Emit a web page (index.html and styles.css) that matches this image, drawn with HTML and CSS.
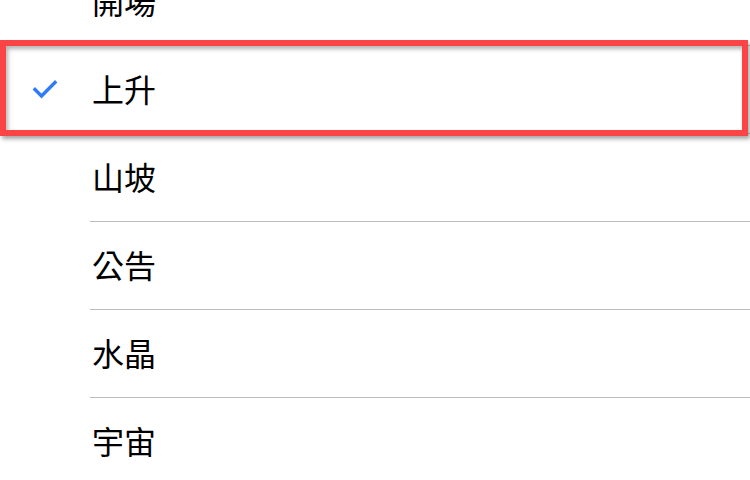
FILE: index.html
```html
<!DOCTYPE html>
<html lang="zh-Hant">
<head>
  <meta charset="UTF-8" />
  <meta name="viewport" content="width=device-width, initial-scale=1.0"/>
  <title>鈴聲選擇</title>
  <link rel="stylesheet" href="styles.css">
</head>
<body>
  <ul class="options">
    <li class="option"><span class="label">開場</span></li>
    <li class="option selected">
      <svg class="check" width="26" height="20" viewBox="0 0 26 20">
        <polyline points="3,10.5 9.5,17 23,3.5" fill="none" stroke="#2f7bf5" stroke-width="3.4" stroke-linecap="square"/>
      </svg>
      <span class="label">上升</span>
    </li>
    <li class="option"><span class="label">山坡</span></li>
    <li class="option"><span class="label">公告</span></li>
    <li class="option"><span class="label">水晶</span></li>
    <li class="option"><span class="label">宇宙</span></li>
  </ul>
</body>
</html>
```

FILE: styles.css
```css
* {
  box-sizing: border-box;
}

body {
  margin: 0;
  background: #ffffff;
  font-family: "Noto Sans CJK TC", "Noto Sans", sans-serif;
  overflow: hidden;
}

.options {
  list-style: none;
  margin: -42px 0 0 0;
  padding: 0;
}

.option {
  position: relative;
  display: flex;
  align-items: center;
  height: 88px;
  padding-left: 90px;
}

.label {
  flex: 1;
  height: 100%;
  display: flex;
  align-items: center;
  padding-left: 2px;
  padding-bottom: 4px;
  border-bottom: 1px solid #bcbcbc;
  font-size: 32px;
  color: #000;
}

.option:last-child .label {
  border-bottom: none;
}

.check {
  position: absolute;
  left: 32px;
  top: 33px;
}

.selected::after {
  content: "";
  position: absolute;
  top: -6px;
  bottom: -2px;
  left: 0;
  right: 2px;
  border: 6px solid #fb4446;
  box-shadow: 2px 3px 4px rgba(0, 0, 0, 0.35), inset 2px 3px 4px rgba(0, 0, 0, 0.3);
  pointer-events: none;
}
```
